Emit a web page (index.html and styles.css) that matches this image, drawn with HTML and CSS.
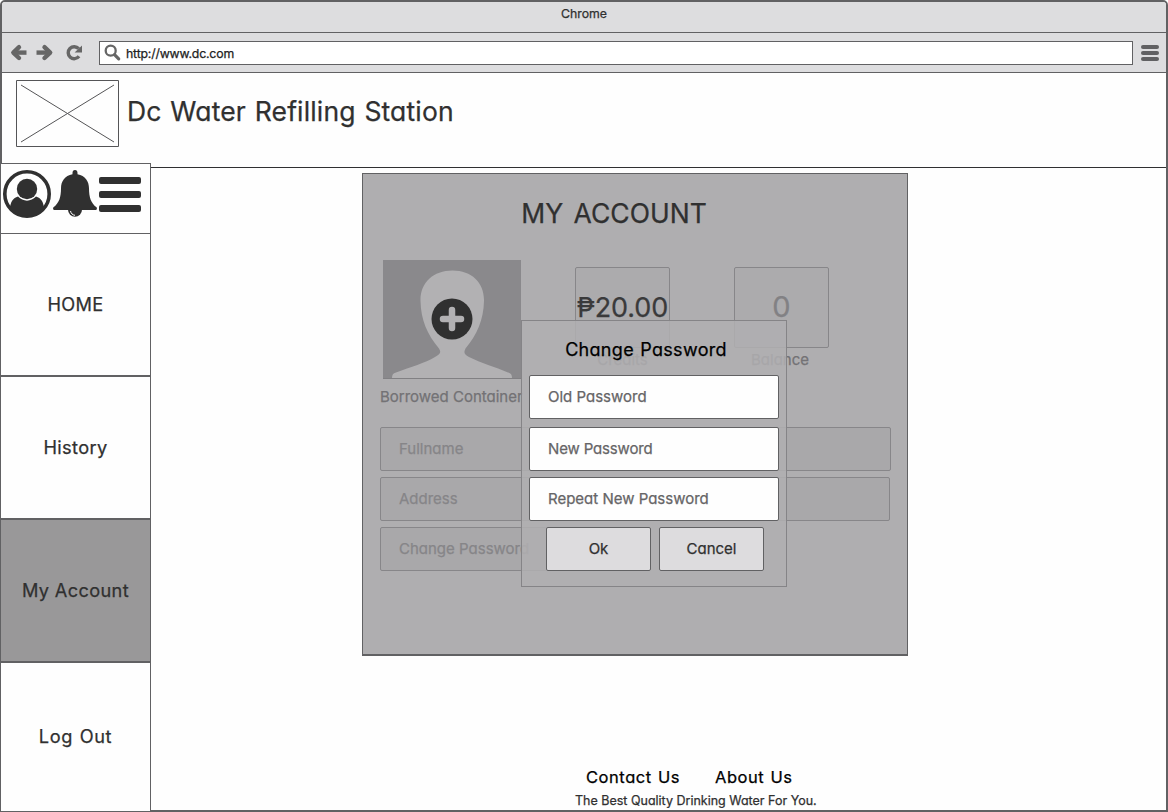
FILE: index.html
```html
<!DOCTYPE html>
<html lang="en">
<head>
<meta charset="utf-8">
<title>Dc Water Refilling Station</title>
<link rel="stylesheet" href="styles.css">
</head>
<body>
<div class="window">
  <div class="titlebar">Chrome</div>
  <div class="toolbar">
    <svg class="nav-icons" width="76" height="20" viewBox="0 0 76 20">
      <g fill="none" stroke="#666" stroke-width="4.4" stroke-linejoin="round">
        <path d="M9 4.200 3.300 9.600l5.700 5.400" stroke-linecap="round"/><path d="M3.500 9.600h13" />
        <path d="M34.500 4.200l5.700 5.400-5.700 5.400" stroke-linecap="round"/><path d="M26.500 9.600h13"/>
        <path d="M68.700 5.700A6 6 0 1 0 69 13.300" stroke-width="3.400"/>
      </g>
      <path d="M72 2.500v6.900h-7.400z" fill="#666"/>
    </svg>
    <div class="address">
      <svg width="18" height="18" viewBox="0 0 18 18" fill="none" stroke="#666"><circle cx="6.700" cy="6.700" r="5" stroke-width="2.300"/><path d="m10.500 10.700 4.200 4.200" stroke-width="3.200" stroke-linecap="round"/></svg>
      <span>http://www.dc.com</span>
    </div>
    <div class="menu"><i></i><i></i><i></i></div>
  </div>
  <header class="header">
    <svg class="logo" width="103" height="67" viewBox="0 0 103 67" fill="none" stroke="#555557"><path d="M.5.5h102v66H.5z"/><path d="m5 5 93 57M98 5 5 62"/></svg>
    <h1>Dc Water Refilling Station</h1>
  </header>
  <div class="body">
    <aside class="sidebar">
      <div class="tools">
        <svg width="50" height="50" viewBox="0 0 50 50">
          <circle cx="25" cy="25" r="22.200" fill="none" stroke="#303030" stroke-width="3.600"/>
          <circle cx="25" cy="20" r="10.200" fill="#303030"/>
          <path d="M8 39c.5-6 3-10 8-11.500 5 5.500 13 5.500 18 0 5 1.500 7.500 5.500 8 11.500a22 22 0 0 1-34 0z" fill="#303030"/>
        </svg>
        <svg width="44" height="50" viewBox="0 0 44 50">
          <path d="M22 1c1.600 0 2.500 1.200 2.500 3v1.300c7.800 1.500 11.500 7 11.500 14 0 9 2 15 7.500 19 .8.700.5 2.700-1 2.700h-41c-1.500 0-1.800-2-1-2.700C6 34.300 8 28.300 8 19.300c0-7 3.700-12.500 11.500-14V4c0-1.800.9-3 2.500-3z" fill="#303030"/>
          <path d="M15 40.500a7 7.300 0 0 0 14 0z" fill="#303030"/>
          <path d="M17.500 42c.5 2.500 2 4 4.500 4.300" fill="none" stroke="#fff"/>
        </svg>
        <div class="bars"><i></i><i></i><i></i></div>
      </div>
      <a class="item home">HOME</a>
      <a class="item">History</a>
      <a class="item active">My Account</a>
      <a class="item last">Log Out</a>
    </aside>
    <main class="content">
      <section class="panel">
        <h2>MY ACCOUNT</h2>
        <div class="summary">
          <div class="profile">
            <svg width="138" height="119" viewBox="0 0 138 119">
              <path d="M0 0h138v119H0z" fill="#8a898c"/>
              <path d="M9 118c0-3 1-5 4-5.500 15-5.500 29-9.500 39-15.500 6-3.500 6-5 4-8.500C44 74 38 60 37.500 41 37 23 50 10.500 69.500 10.500S101.500 23 101 41c-.5 19-7 34-18.500 47.500-2 4-1.500 5.500 3.500 8.500 12 6 26 10 39 15.500 3 .5 4 2.500 4 5.500z" fill="#b2b1b3"/>
              <path d="M0 118.500h138" stroke="#818083"/>
              <circle cx="69" cy="59" r="20.500" fill="#303030"/>
              <path d="M69 50v18M60 59h18" stroke="#b2b1b3" stroke-width="6.500" stroke-linecap="round"/>
            </svg>
            <div class="label borrowed">Borrowed Container</div>
          </div>
          <div class="stat"><div class="box credit">₱20.00</div><div class="label">Credits</div></div>
          <div class="stat"><div class="box zero">0</div><div class="label balance">Balance</div></div>
        </div>
        <div class="fields">
          <div class="field full">Fullname</div>
          <div class="field addr">Address</div>
          <div class="field pass">Change Password</div>
        </div>
        <div class="dialog">
          <h3>Change Password</h3>
          <div class="input">Old Password</div>
          <div class="input new">New Password</div>
          <div class="input">Repeat New Password</div>
          <div class="actions"><div class="btn">Ok</div><div class="btn">Cancel</div></div>
        </div>
      </section>
      <footer class="footer">
        <div class="links"><a>Contact Us</a><a>About Us</a></div>
        <p>The Best Quality Drinking Water For You.</p>
      </footer>
    </main>
  </div>
</div>
</body>
</html>
```
FILE: styles.css
```css
* { box-sizing: border-box; margin: 0; padding: 0; }
body { background: #fff; color: #303030; font-family: Inter, "Liberation Sans", sans-serif; font-feature-settings: "cv11" 1; -webkit-text-stroke: .25px; overflow: hidden; }
svg { display: block; flex: none; }
h1, h2, h3 { font-weight: 400; white-space: nowrap; }

.window { width: 1168px; height: 812px; border: 2px solid #616163; border-radius: 5px 5px 0 0; display: flex; flex-direction: column; background: #fefefe; }
.titlebar { height: 31px; background: #dddddf; border-bottom: 1px solid #616163; border-radius: 3px 3px 0 0; text-align: center; font-size: 12.3px; line-height: 23px; }
.toolbar { height: 40px; background: #dddddf; border-bottom: 1px solid #616163; display: flex; align-items: flex-start; padding: 8px 7px 0 8px; }
.nav-icons { margin-top: 2px; }
.address { margin-left: 13px; width: 1034px; height: 24px; border: 1px solid #616163; background: #fff; display: flex; align-items: center; padding-left: 4px; gap: 4px; font-size: 12.3px; letter-spacing: -.18px; color: #222; }
.menu { margin: 4px 0 0 8px; width: 18px; display: flex; flex-direction: column; gap: 2px; }
.menu i { height: 4px; border-radius: 2px; background: #616163; }

.header { height: 95px; flex: none; border-bottom: 1px solid #303032; display: flex; padding: 7px 0 0 14px; }
.header h1 { margin-left: 8px; font-size: 26.5px; line-height: 63px; letter-spacing: .15px; word-spacing: 1.2px; }

.body { flex: 1; display: flex; min-height: 0; }
.sidebar { position: relative; width: 151px; height: 649px; margin: -5px 0 0 -2px; flex: none; background: #fefefe; }
.tools { height: 70px; border: 1px solid #616163; border-bottom: 0; display: flex; padding: 5px 0 0 1px; }
.tools svg + svg { margin-left: 1px; }
.bars { width: 42px; margin: 8px 0 0 2px; display: flex; flex-direction: column; gap: 7px; }
.bars i { height: 7px; border-radius: 2px; background: #303030; }
.item { height: 143px; border: 1px solid #616163; display: flex; align-items: center; justify-content: center; font-size: 18.2px; letter-spacing: .35px; padding-bottom: 2px; }
.item.active { background: #999899; padding-bottom: 1px; }
.item.last { height: 150px; letter-spacing: .6px; word-spacing: 1px; }

.content { width: 1015px; display: flex; flex-direction: column; align-items: flex-start; padding: 5px 0 0 211px; }
.panel { position: relative; width: 546px; height: 483px; flex: none; border: 1px solid #616163; border-bottom-width: 2px; background: #afaeb0; padding-left: 17px; }
.panel h2 { width: 468px; height: 79px; line-height: 79px; text-align: center; font-size: 26.5px; word-spacing: 3px; }
.summary { height: 174px; display: grid; grid-template-columns: 131px 95px 95px; column-gap: 64px; }
.profile { padding-top: 7px; }
.profile svg { margin-left: 3px; }
.label { font-size: 15px; line-height: 23px; color: #737275; white-space: nowrap; }
.borrowed { line-height: 35px; }
.stat { padding-top: 14px; }
.stat .label { text-align: center; }
.stat .balance { padding-right: 3px; }
.box { height: 81px; border: 1px solid #878689; border-radius: 2px; background: #acabad; display: flex; align-items: center; justify-content: center; font-size: 27px; }
.credit { color: #3a3a3b; letter-spacing: -.1px; }
.zero { font-size: 29px; color: #828184; padding-bottom: 3px; }
.fields { display: flex; flex-direction: column; gap: 6px; }
.field { height: 44px; border: 1px solid #878689; border-radius: 2px; background: #a9a8aa; padding-left: 18px; font-size: 15px; line-height: 42px; color: #868588; }
.full { width: 511px; }
.addr { width: 510px; }
.pass { width: 230px; }

.dialog { position: absolute; left: 158px; top: 146px; width: 266px; height: 267px; border: 1px solid #858487; background: rgba(176, 175, 177, .86); padding: 0 7px; }
.dialog h3 { height: 54px; line-height: 58px; text-align: center; color: #000; font-size: 18px; letter-spacing: .3px; word-spacing: 1px; padding-right: 16px; }
.input { width: 250px; height: 44px; border: 1px solid #616163; border-radius: 2px; background: #fefefe; padding-left: 18px; font-size: 15px; line-height: 42px; color: #666567; }
.input.new { margin: 8px 0 6px; letter-spacing: -.15px; }
.actions { display: flex; gap: 8px; margin: 6px 0 0 17px; }
.btn { width: 105px; height: 44px; border: 1px solid #616163; border-radius: 2px; background: #dddcde; text-align: center; font-size: 15px; line-height: 42px; }

.footer { margin-top: 111px; margin-left: 213px; }
.links { display: flex; gap: 35px; padding-left: 11px; font-size: 16.5px; letter-spacing: .55px; word-spacing: 1px; line-height: 20px; color: #000; }
.footer p { font-size: 12.5px; line-height: 27px; white-space: nowrap; }
```
